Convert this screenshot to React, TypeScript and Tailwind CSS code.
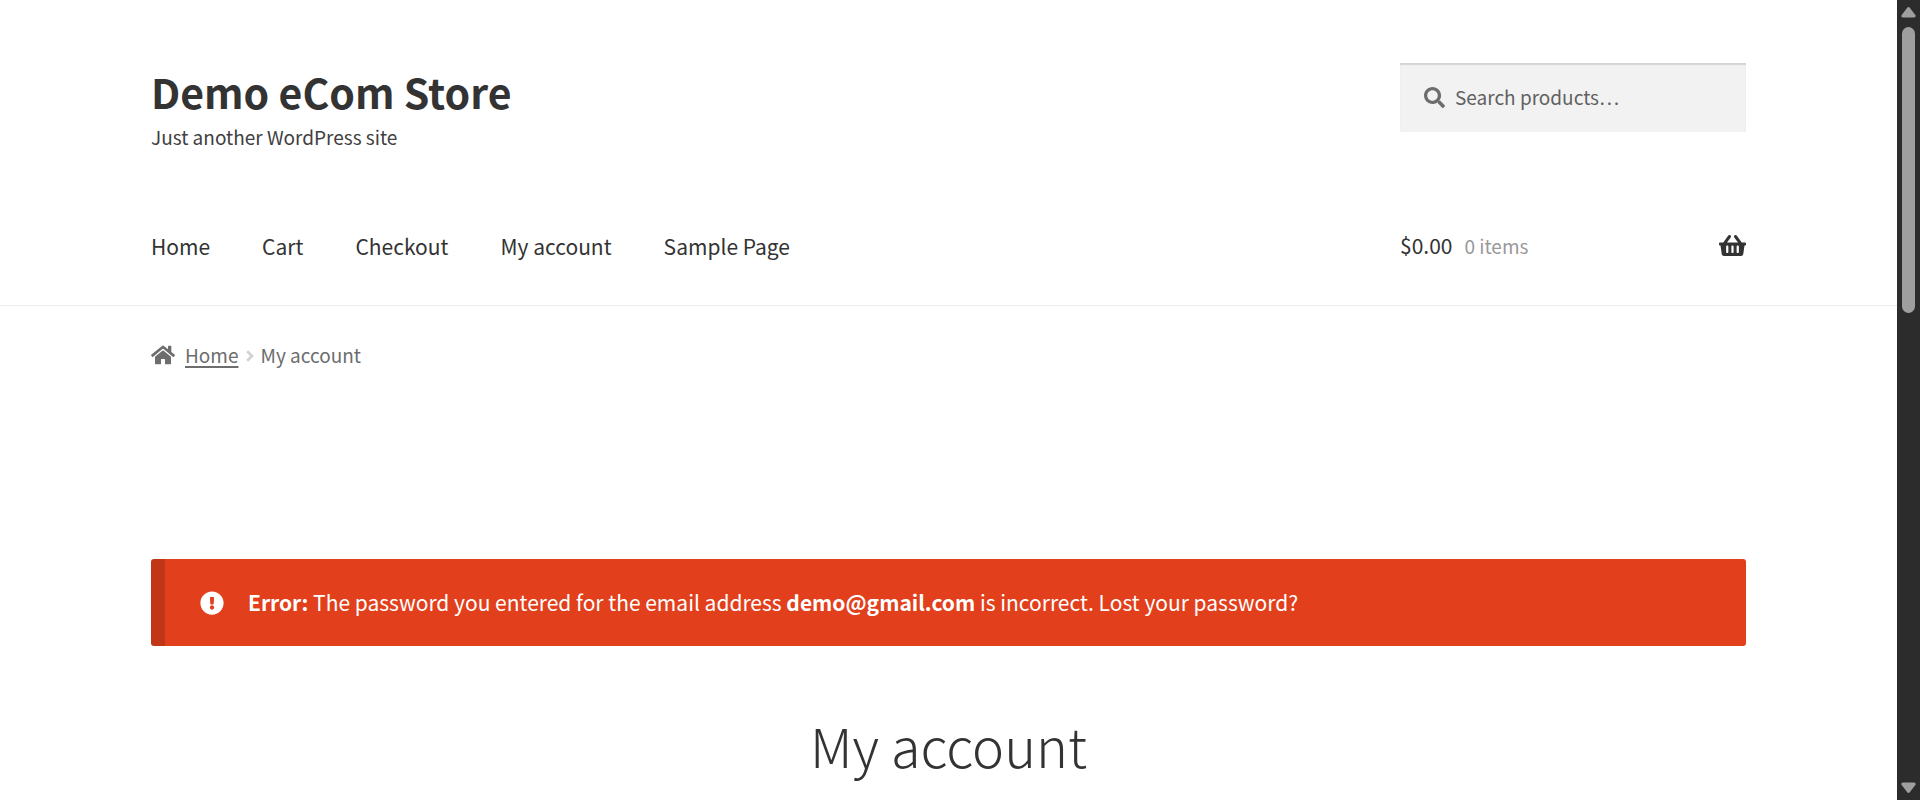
import React from "react";
import { FaExclamationCircle, FaHome, FaSearch, FaShoppingBasket } from "react-icons/fa";

const navItems = ["Home", "Cart", "Checkout", "My account", "Sample Page"];

function Header() {
  return (
    <header className="border-b border-[#ededed] pt-[63px]">
      <div className="mx-auto max-w-[1595px]">
        <div className="flex items-start justify-between">
          <div className="pt-1">
            <h1 className="text-[41px] font-bold leading-[48px] text-[#333333]">
              <a href="#home">Demo eCom Store</a>
            </h1>
            <p className="pt-1.5 text-[19px] leading-8 text-[#404040]">Just another WordPress site</p>
          </div>
          <form
            role="search"
            className="flex h-[69px] w-[346px] items-center gap-2.5 bg-[#f2f2f2] pl-6 text-[#6d6d6d] shadow-[inset_0_2px_1px_rgba(0,0,0,0.125)]"
          >
            <FaSearch aria-hidden="true" className="size-[21px] shrink-0" />
            <input
              type="search"
              aria-label="Search products"
              placeholder="Search products…"
              className="min-w-0 flex-1 bg-transparent text-[19px] outline-none placeholder:text-[#616161]"
            />
          </form>
        </div>
        <div className="flex items-center justify-between pt-[75px] pb-[42px]">
          <nav aria-label="Primary" className="flex gap-[52px] text-[21px] leading-[34px] text-[#333333]">
            {navItems.map((item) => (
              <a key={item} href="#page">{item}</a>
            ))}
          </nav>
          <a href="#cart" className="flex w-[346px] items-center justify-between text-[#333333]">
            <span className="flex items-baseline gap-3">
              <span className="text-[21px] leading-[34px]">$0.00</span>
              <span className="text-[19px] leading-[34px] text-[#999999]">0 items</span>
            </span>
            <FaShoppingBasket aria-label="View your shopping cart" className="size-[27px]" />
          </a>
        </div>
      </div>
    </header>
  );
}

function Breadcrumb() {
  return (
    <nav aria-label="Breadcrumb" className="flex items-center pt-[33px] text-[19px] leading-8 text-[#6d6d6d]">
      <FaHome aria-hidden="true" className="mr-2.5 size-6" />
      <a href="#home" className="underline decoration-2 underline-offset-[3px]">Home</a>
      <svg aria-hidden="true" className="ml-2 mr-1.5 mt-0.5" width="8" height="12" viewBox="0 0 8 12" fill="none" stroke="#d3d3d3" strokeWidth="2.8">
        <path d="M1.2 1.2L6 6L1.2 10.8" />
      </svg>
      <span>My account</span>
    </nav>
  );
}

function ErrorNotice() {
  return (
    <div
      role="alert"
      className="mt-[188px] flex items-center gap-6 rounded-[3px] border-l-[14px] border-[#c03616] bg-[#e2401c] py-[26px] pl-[35px] text-[21px] leading-[35px] text-white"
    >
      <FaExclamationCircle aria-hidden="true" className="size-6 shrink-0" />
      <p>
        <strong className="font-bold">Error:</strong> The password you entered for the email address{" "}
        <strong className="font-bold">demo@gmail.com</strong> is incorrect.{" "}
        <a href="#lost-password">Lost your password?</a>
      </p>
    </div>
  );
}

function ScrollRail() {
  return (
    <div aria-hidden="true" className="flex w-[23px] shrink-0 flex-col items-center bg-[#2c2c2c] py-[7px] text-[#9f9f9f]">
      <svg width="15" height="11" viewBox="0 0 15 11" fill="currentColor">
        <path d="M6.2 0.8Q7.5-.8 8.8.8L14.5 8.2Q15.2 10.3 13 10.5H2Q-.2 10.3.5 8.2Z" />
      </svg>
      <div className="mt-[9px] h-[286px] w-[13px] rounded-full bg-[#9f9f9f]" />
      <svg className="mt-auto" width="15" height="11" viewBox="0 0 15 11" fill="currentColor">
        <path d="M6.2 10.2Q7.5 11.8 8.8 10.2L14.5 2.8Q15.2.7 13 .5H2Q-.2.7.5 2.8Z" />
      </svg>
    </div>
  );
}

export default function App() {
  return (
    <div className="flex min-h-screen bg-white font-['Noto_Sans_CJK_SC',sans-serif]">
      <div className="min-w-0 flex-1">
        <Header />
        <main className="mx-auto max-w-[1595px]">
          <Breadcrumb />
          <ErrorNotice />
          <h2 className="pt-[61px] text-center text-[54px] font-light leading-[76px] text-[#333333]">My account</h2>
        </main>
      </div>
      <ScrollRail />
    </div>
  );
}
